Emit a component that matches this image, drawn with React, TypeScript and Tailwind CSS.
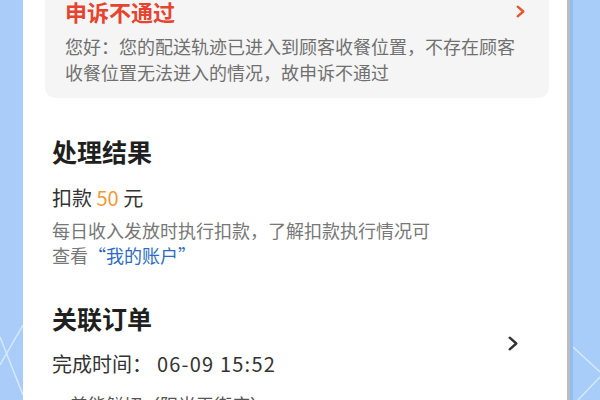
import React from "react";

function Chevron({ color, w, h, sw }: { color: string; w: number; h: number; sw: number }) {
  return (
    <svg width={w} height={h} viewBox={`0 0 ${w} ${h}`} fill="none">
      <polyline
        points={`${sw / 2 + 0.5},${sw / 2 + 0.5} ${w - sw / 2 - 0.5},${h / 2} ${sw / 2 + 0.5},${h - sw / 2 - 0.5}`}
        stroke={color}
        strokeWidth={sw}
        strokeLinecap="round"
        strokeLinejoin="round"
      />
    </svg>
  );
}

export default function App() {
  return (
    <div className="flex h-[400px] w-[600px] overflow-hidden bg-[#a8cdf8] font-['Noto_Sans_CJK_SC','Noto_Sans',sans-serif]">
      <div className="relative w-[23px] shrink-0 bg-[#a9cdf8]">
        <svg className="absolute left-0 top-0" width="23" height="400" viewBox="0 0 23 400">
          <line x1="23" y1="325" x2="0" y2="365" stroke="#d6e8fd" strokeWidth="1.5" />
          <line x1="0" y1="337" x2="23" y2="395" stroke="#d6e8fd" strokeWidth="1.5" />
        </svg>
      </div>

      <div className="flex flex-1 flex-col overflow-hidden border-r-[3px] border-[#bcbcbc] bg-white">
        <div className="ml-[22px] mr-[18px] rounded-b-[10px] bg-[#f5f5f5] pb-[13px] pl-[20px] pr-[24px]">
          <div className="flex h-[22px] items-center justify-between">
            <span className="text-[22px] font-bold leading-[22px] text-[#e6442f]">申诉不通过</span>
            <Chevron color="#e6552f" w={9} h={13} sw={2.4} />
          </div>
          <p className="mt-[11px] text-[18px] leading-[26px] text-[#707070]">
            您好：您的配送轨迹已进入到顾客收餐位置，不存在顾客收餐位置无法进入的情况，故申诉不通过
          </p>
        </div>

        <div className="px-[29px]">
          <h2 className="mt-[36px] text-[25px] font-bold leading-[34px] text-[#1f1f1f]">处理结果</h2>
          <p className="mt-[16px] text-[20px] leading-[28px] text-[#333333]">
            扣款 <span className="text-[#f09a3a]">50</span> 元
          </p>
          <p className="mt-[6px] max-w-[390px] text-[18px] leading-[25px] text-[#777777]">
            每日收入发放时执行扣款，了解扣款执行情况可查看<span className="text-[#2d6cc0]">“我的账户”</span>
          </p>
        </div>

        <div className="flex justify-between pl-[29px] pr-[49px]">
          <div className="flex flex-col">
            <h2 className="mt-[33px] text-[25px] font-bold leading-[34px] text-[#1f1f1f]">关联订单</h2>
            <p className="mt-[15px] text-[20px] leading-[28px] text-[#333333]">
              完成时间：<span className="ml-[5px] tracking-[1.2px]">06-09 15:52</span>
            </p>
            <div className="mt-[13px] flex items-center gap-[12px]">
              <span className="h-[6px] w-[6px] rounded-full bg-[#f39a37]" />
              <span className="text-[18px] leading-[26px] text-[#555555]">美能鲜切（阳光王街店）</span>
            </div>
          </div>
          <div className="mt-[68px] self-start">
            <Chevron color="#333333" w={10} h={15} sw={2.4} />
          </div>
        </div>
      </div>

      <div className="relative w-[30px] shrink-0 border-l-[3px] border-[#92bdf1] bg-[#a8cdf8]">
        <svg className="absolute left-0 top-0" width="27" height="400" viewBox="0 0 27 400">
          <line x1="0" y1="347" x2="27" y2="372" stroke="#d6e8fd" strokeWidth="1.5" />
          <line x1="27" y1="377" x2="5" y2="400" stroke="#d6e8fd" strokeWidth="1.5" />
        </svg>
      </div>
    </div>
  );
}
